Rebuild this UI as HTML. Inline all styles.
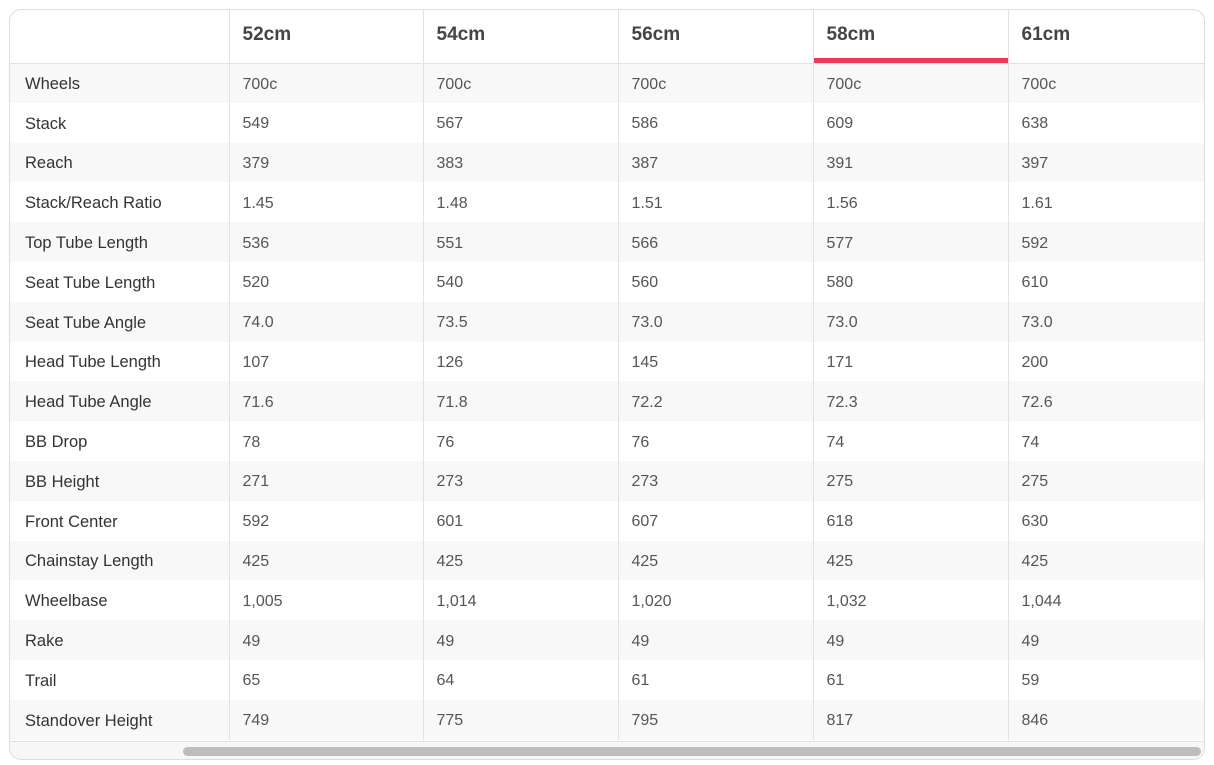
<!DOCTYPE html>
<html><head><style>
html,body{margin:0;padding:0;background:#fff;width:1214px;height:765px;overflow:hidden}
body{font-family:"Liberation Sans",sans-serif;color:#333}
.box{position:absolute;left:9px;top:9px;width:1194px;height:749px;border:1px solid #ddd;border-radius:12px;overflow:hidden;background:#fff}
table{border-collapse:collapse;table-layout:fixed;width:1194px}
td,th{padding:0 0 0 13px;text-align:left;white-space:nowrap;border-left:1px solid #e2e2e2}
td:first-child,th:first-child{border-left:none;padding-left:15px}
th{height:53px;font-size:19px;font-weight:bold;color:#444;border-bottom:1px solid #e2e2e2;position:relative;padding-bottom:3px;box-sizing:border-box}
th.sel:after{content:"";position:absolute;left:0;right:0;bottom:0;height:5px;background:#f0385a}
td{height:39.8px;font-size:16px;color:#555;padding-top:3px;box-sizing:border-box}
td:first-child{color:#333;font-size:16.5px}
tr:nth-child(odd) td{background:#f8f8f8}
.sb{position:absolute;left:0;right:0;top:731px;height:18px;background:#f7f7f7;border-top:1px solid #e2e2e2}
.th{position:absolute;left:173px;right:3px;top:5px;height:9px;border-radius:5px;background:#bdbdbd}
</style></head><body>
<div class="box">
<table>
<colgroup><col style="width:219px"><col style="width:194px"><col style="width:195px"><col style="width:195px"><col style="width:195px"><col style="width:196px"></colgroup>
<thead><tr><th></th><th>52cm</th><th>54cm</th><th>56cm</th><th class="sel">58cm</th><th>61cm</th></tr></thead>
<tbody>
<tr><td>Wheels</td><td>700c</td><td>700c</td><td>700c</td><td>700c</td><td>700c</td></tr>
<tr><td>Stack</td><td>549</td><td>567</td><td>586</td><td>609</td><td>638</td></tr>
<tr><td>Reach</td><td>379</td><td>383</td><td>387</td><td>391</td><td>397</td></tr>
<tr><td>Stack/Reach Ratio</td><td>1.45</td><td>1.48</td><td>1.51</td><td>1.56</td><td>1.61</td></tr>
<tr><td>Top Tube Length</td><td>536</td><td>551</td><td>566</td><td>577</td><td>592</td></tr>
<tr><td>Seat Tube Length</td><td>520</td><td>540</td><td>560</td><td>580</td><td>610</td></tr>
<tr><td>Seat Tube Angle</td><td>74.0</td><td>73.5</td><td>73.0</td><td>73.0</td><td>73.0</td></tr>
<tr><td>Head Tube Length</td><td>107</td><td>126</td><td>145</td><td>171</td><td>200</td></tr>
<tr><td>Head Tube Angle</td><td>71.6</td><td>71.8</td><td>72.2</td><td>72.3</td><td>72.6</td></tr>
<tr><td>BB Drop</td><td>78</td><td>76</td><td>76</td><td>74</td><td>74</td></tr>
<tr><td>BB Height</td><td>271</td><td>273</td><td>273</td><td>275</td><td>275</td></tr>
<tr><td>Front Center</td><td>592</td><td>601</td><td>607</td><td>618</td><td>630</td></tr>
<tr><td>Chainstay Length</td><td>425</td><td>425</td><td>425</td><td>425</td><td>425</td></tr>
<tr><td>Wheelbase</td><td>1,005</td><td>1,014</td><td>1,020</td><td>1,032</td><td>1,044</td></tr>
<tr><td>Rake</td><td>49</td><td>49</td><td>49</td><td>49</td><td>49</td></tr>
<tr><td>Trail</td><td>65</td><td>64</td><td>61</td><td>61</td><td>59</td></tr>
<tr><td>Standover Height</td><td>749</td><td>775</td><td>795</td><td>817</td><td>846</td></tr>
</tbody></table>
<div class="sb"><div class="th"></div></div>
</div>
</body></html>
